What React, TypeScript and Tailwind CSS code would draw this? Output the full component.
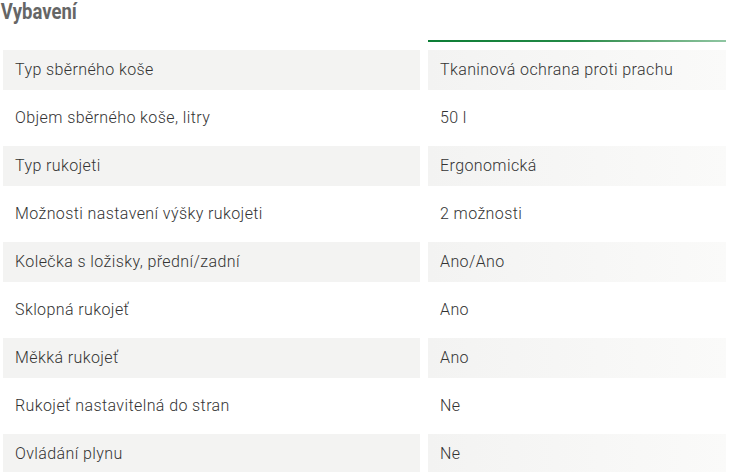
const rows: [string, string][] = [
  ['Typ sběrného koše', 'Tkaninová ochrana proti prachu'],
  ['Objem sběrného koše, litry', '50 l'],
  ['Typ rukojeti', 'Ergonomická'],
  ['Možnosti nastavení výšky rukojeti', '2 možnosti'],
  ['Kolečka s ložisky, přední/zadní', 'Ano/Ano'],
  ['Sklopná rukojeť', 'Ano'],
  ['Měkká rukojeť', 'Ano'],
  ['Rukojeť nastavitelná do stran', 'Ne'],
  ['Ovládání plynu', 'Ne'],
]

export default function App() {
  return (
    <div className="w-[729px] h-[472px] overflow-hidden bg-white font-['Roboto',sans-serif]">
      <h2 className="pl-[1px] text-[22px] leading-[24px] font-bold text-[#666] origin-left scale-x-[0.84]">
        Vybavení
      </h2>
      <div className="flex mt-[16px]">
        <div className="w-[428px]" />
        <div className="w-[298px] h-[2px] bg-gradient-to-r from-[#0b7d35] via-[#238a47] to-[#8fc6a2]" />
      </div>
      <div className="mt-[8px] flex flex-col gap-2">
        {rows.map(([label, value], i) => {
          const odd = i % 2 === 0
          return (
            <div key={label} className="flex h-10 text-[16px] font-light text-[#333] tracking-[0.4px]">
              <div className={'ml-[3px] w-[417px] flex items-center pl-3 ' + (odd ? 'bg-[#f3f3f2]' : '')}>
                {label}
              </div>
              <div
                className={
                  'ml-2 w-[298px] flex items-center pl-3 ' +
                  (odd ? 'bg-gradient-to-r from-[#f3f3f2] to-[#fafaf9]' : '')
                }
              >
                {value}
              </div>
            </div>
          )
        })}
      </div>
    </div>
  )
}
